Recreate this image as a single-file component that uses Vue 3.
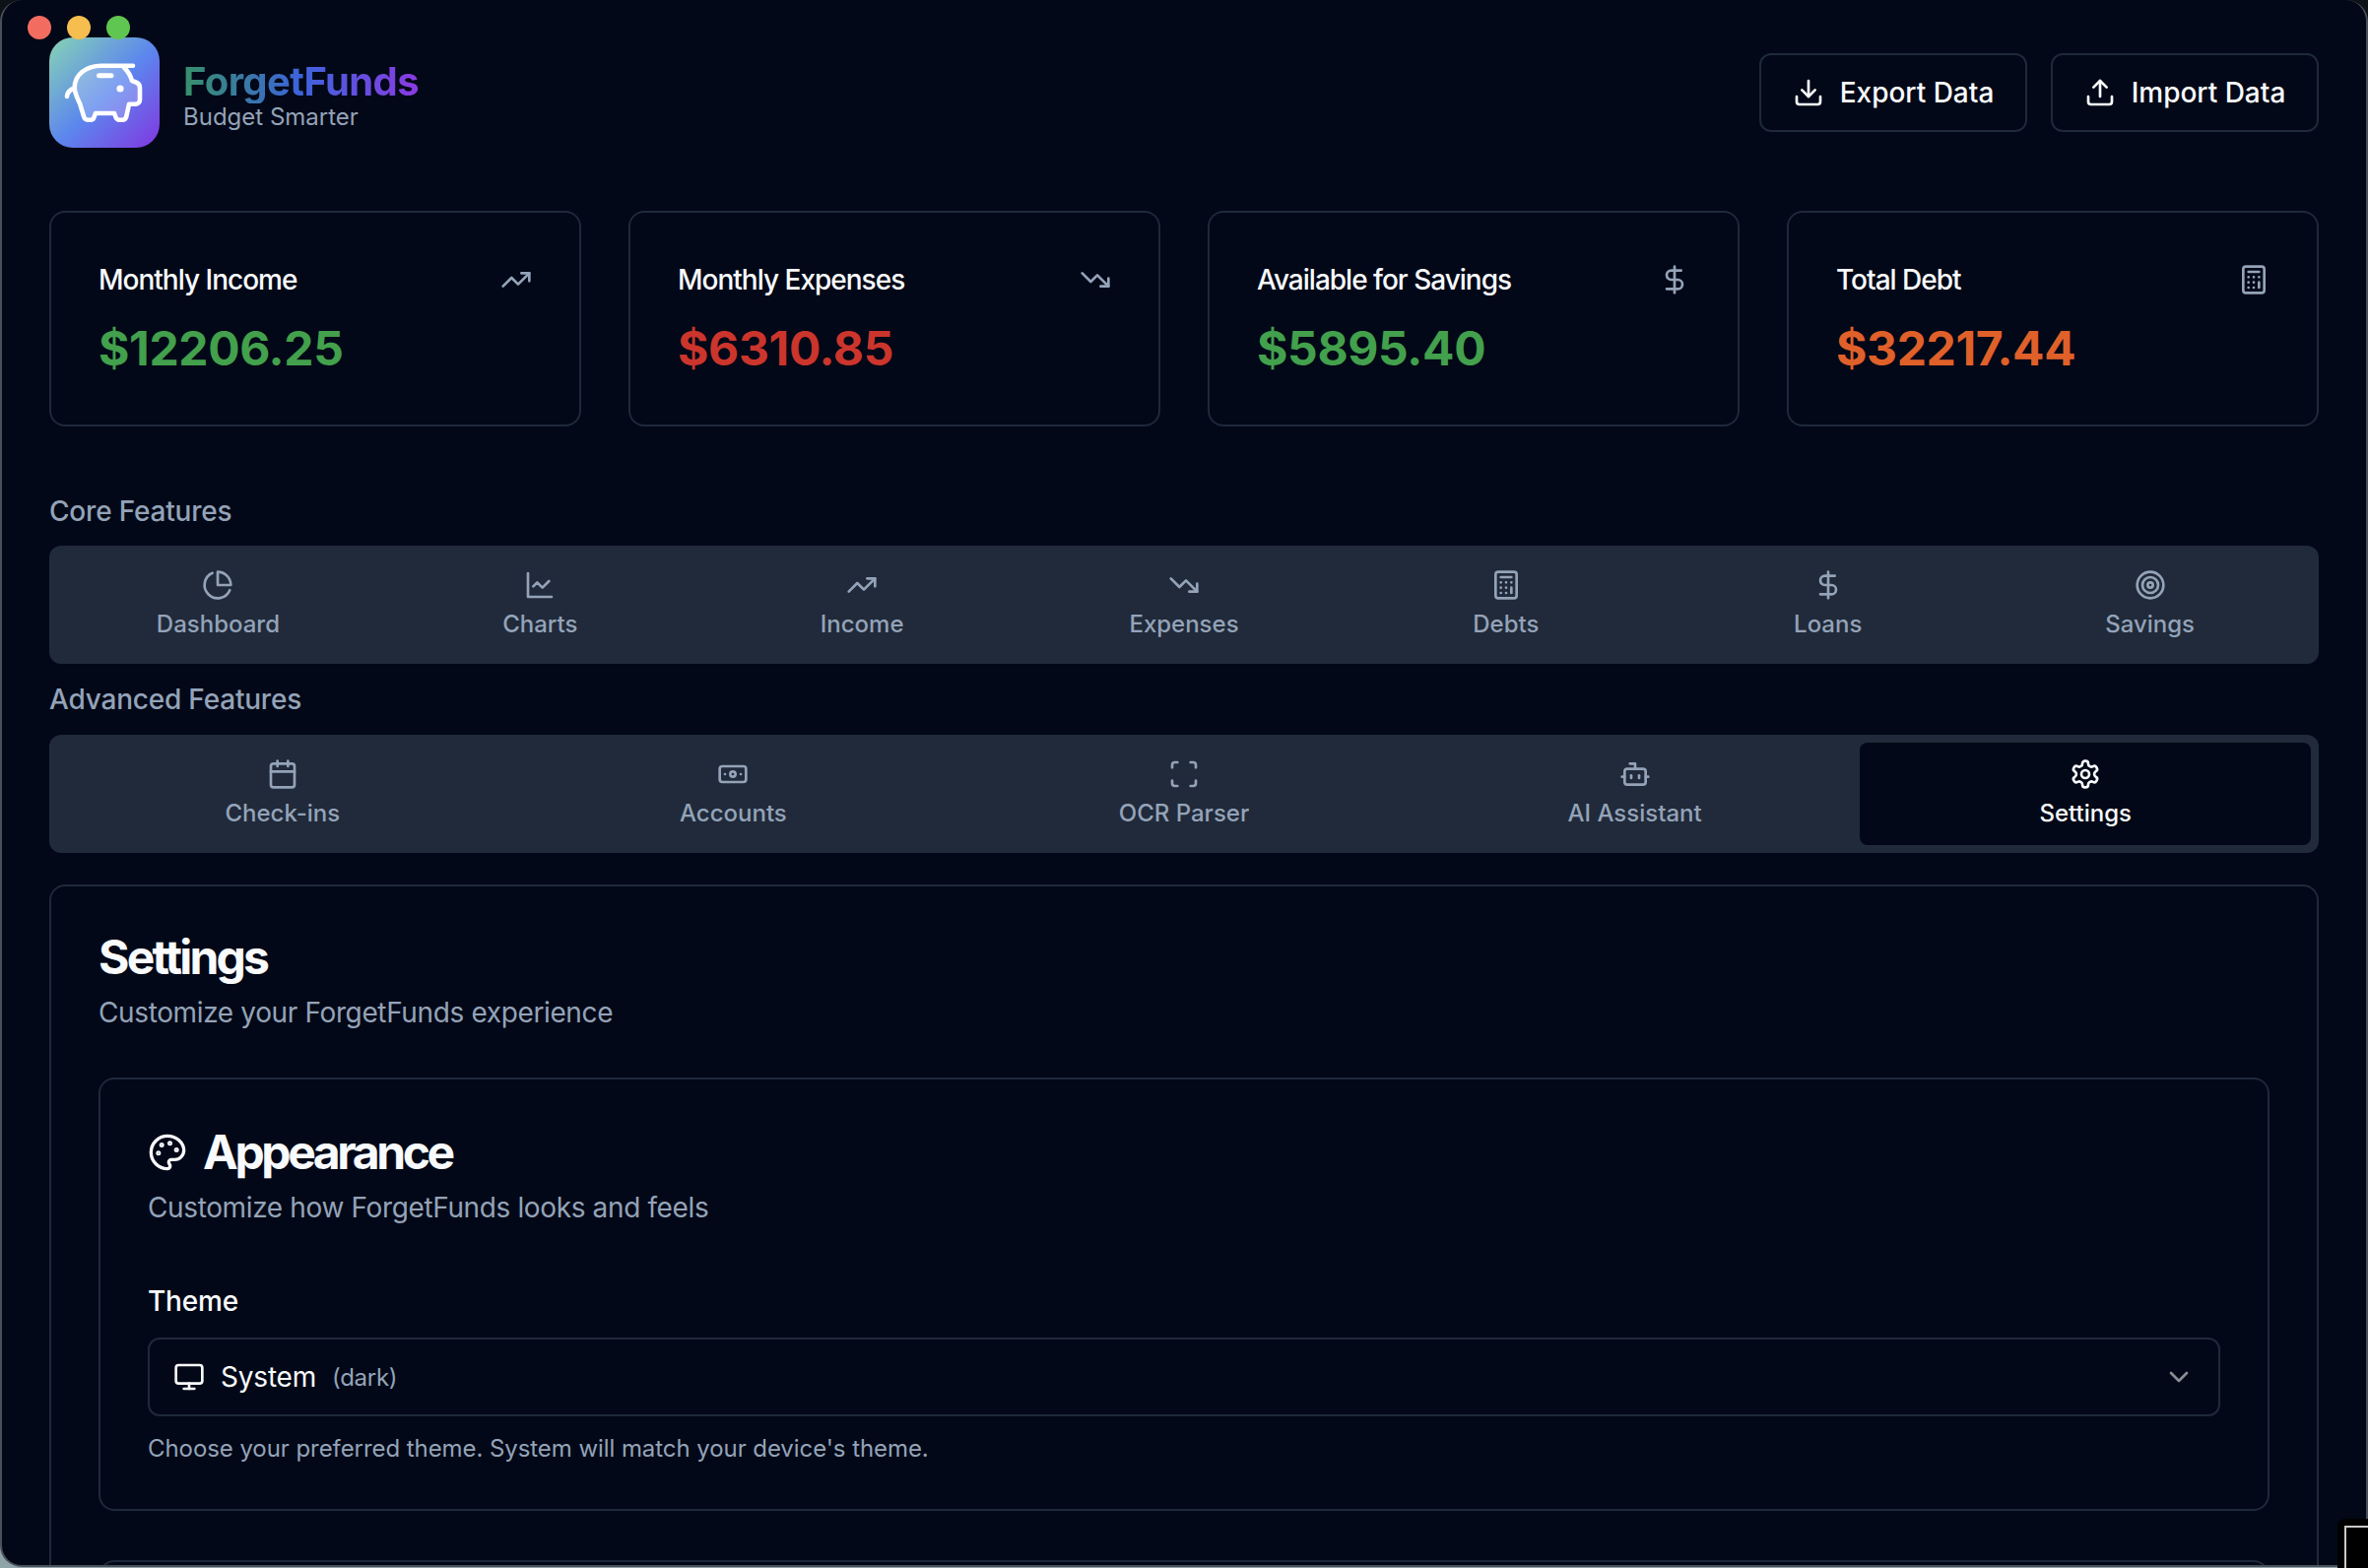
<template>
  <div class="screen">
    <div class="window">
      <div class="lights">
        <span class="light red"></span>
        <span class="light yellow"></span>
        <span class="light green"></span>
      </div>

      <header class="topbar">
        <div class="brand">
          <div class="logo">
            <svg viewBox="0 0 112 112" class="pig" fill="none" stroke="#fff" stroke-width="4.6" stroke-linecap="round" stroke-linejoin="round">
              <path
                d="M85 28.7H53C37 28.7 25.7 38 25.7 51c0 6 3 11 5.3 16l4 13c.6 2.4 2 3.7 4 3.7h3c2 0 3-1.2 3.6-3l1.4-3.7h19l1.4 3.7c.7 1.8 1.8 3 3.6 3h3.4c2 0 3.2-1.3 3.8-3l2.8-13h6.500c2.6 0 4.5-1.8 4.5-4.5V51c0-2.5-1.4-4.6-4-5.5l-4-1.5c-1.5-5.5-4.5-10-8-13.5"
                fill="rgba(255,255,255,0.22)"
              />
              <path d="M18 60c0-3 2-5.5 5-7.5" />
              <path d="M50.5 38.7h12.5" stroke-width="5" />
              <circle cx="72" cy="52" r="3.6" fill="#fff" stroke="none" />
            </svg>
          </div>
          <div class="brand-text">
            <h1 class="brand-name">ForgetFunds</h1>
            <p class="brand-sub">Budget Smarter</p>
          </div>
        </div>
        <div class="actions">
          <button class="btn">
            <svg class="icon" viewBox="0 0 24 24"><path d="M21 15v4a2 2 0 0 1-2 2H5a2 2 0 0 1-2-2v-4" /><polyline points="7 10 12 15 17 10" /><line x1="12" y1="15" x2="12" y2="3" /></svg>
            Export Data
          </button>
          <button class="btn">
            <svg class="icon" viewBox="0 0 24 24"><path d="M21 15v4a2 2 0 0 1-2 2H5a2 2 0 0 1-2-2v-4" /><polyline points="17 8 12 3 7 8" /><line x1="12" y1="3" x2="12" y2="15" /></svg>
            Import Data
          </button>
        </div>
      </header>

      <section class="stats">
        <div v-for="s in stats" :key="s.title" class="stat">
          <div class="stat-head">
            <span class="stat-title">{{ s.title }}</span>
            <svg class="icon muted" viewBox="0 0 24 24" v-html="icons[s.icon]"></svg>
          </div>
          <div class="stat-value" :class="s.tone">{{ s.value }}</div>
        </div>
      </section>

      <h2 class="group-label first">Core Features</h2>
      <nav class="tabs core">
        <div v-for="t in coreTabs" :key="t.label" class="tab">
          <svg class="icon" viewBox="0 0 24 24" v-html="icons[t.icon]"></svg>
          <span>{{ t.label }}</span>
        </div>
      </nav>

      <h2 class="group-label">Advanced Features</h2>
      <nav class="tabs advanced">
        <div v-for="t in advancedTabs" :key="t.label" class="tab" :class="{ active: t.active }">
          <svg class="icon" viewBox="0 0 24 24" v-html="icons[t.icon]"></svg>
          <span>{{ t.label }}</span>
        </div>
      </nav>

      <main class="panel">
        <h2 class="title">Settings</h2>
        <p class="desc">Customize your ForgetFunds experience</p>

        <div class="sub-card">
          <h3 class="title with-icon">
            <svg class="icon palette" viewBox="0 0 24 24" v-html="icons.palette"></svg>
            Appearance
          </h3>
          <p class="desc">Customize how ForgetFunds looks and feels</p>

          <label class="field-label">Theme</label>
          <div class="select">
            <svg class="icon" viewBox="0 0 24 24"><rect x="2" y="3" width="20" height="14" rx="2" /><line x1="8" y1="21" x2="16" y2="21" /><line x1="12" y1="17" x2="12" y2="21" /></svg>
            <span class="select-value">System</span>
            <span class="select-note">(dark)</span>
            <svg class="icon chevron" viewBox="0 0 24 24"><path d="m6 9 6 6 6-6" /></svg>
          </div>
          <p class="hint">Choose your preferred theme. System will match your device's theme.</p>
        </div>

        <div class="sub-card next"></div>
      </main>
    </div>
    <div class="other-window"><div class="other-inner"></div></div>
  </div>
</template>

<script setup>
const icons = {
  up: '<polyline points="22 7 13.5 15.5 8.5 10.5 2 17" /><polyline points="16 7 22 7 22 13" />',
  down: '<polyline points="22 17 13.5 8.5 8.5 13.5 2 7" /><polyline points="16 17 22 17 22 11" />',
  dollar: '<line x1="12" y1="2" x2="12" y2="22" /><path d="M17 5H9.5a3.5 3.5 0 0 0 0 7h5a3.5 3.5 0 0 1 0 7H6" />',
  calc: '<rect x="4" y="2" width="16" height="20" rx="2" /><line x1="8" y1="6" x2="16" y2="6" /><line x1="16" y1="14" x2="16" y2="18" /><path d="M16 10h.01M12 10h.01M8 10h.01M12 14h.01M8 14h.01M12 18h.01M8 18h.01" />',
  pie: '<path d="M21.21 15.89A10 10 0 1 1 8 2.83" /><path d="M22 12A10 10 0 0 0 12 2v10z" />',
  line: '<path d="M3 3v18h18" /><path d="m19 9-5 5-4-4-3 3" />',
  target: '<circle cx="12" cy="12" r="10" /><circle cx="12" cy="12" r="6" /><circle cx="12" cy="12" r="2" />',
  calendar: '<rect x="3" y="4" width="18" height="18" rx="2" /><line x1="16" y1="2" x2="16" y2="6" /><line x1="8" y1="2" x2="8" y2="6" /><line x1="3" y1="10" x2="21" y2="10" />',
  banknote: '<rect x="2" y="6" width="20" height="12" rx="2" /><circle cx="12" cy="12" r="2" /><path d="M6 12h.01M18 12h.01" />',
  scan: '<path d="M3 7V5a2 2 0 0 1 2-2h2" /><path d="M17 3h2a2 2 0 0 1 2 2v2" /><path d="M21 17v2a2 2 0 0 1-2 2h-2" /><path d="M7 21H5a2 2 0 0 1-2-2v-2" />',
  bot: '<path d="M12 8V4H8" /><rect x="4" y="8" width="16" height="12" rx="2" /><path d="M2 14h2" /><path d="M20 14h2" /><path d="M15 13v2" /><path d="M9 13v2" />',
  gear: '<path d="M12.22 2h-.44a2 2 0 0 0-2 2v.18a2 2 0 0 1-1 1.73l-.43.25a2 2 0 0 1-2 0l-.15-.08a2 2 0 0 0-2.73.73l-.22.38a2 2 0 0 0 .73 2.73l.15.1a2 2 0 0 1 1 1.72v.51a2 2 0 0 1-1 1.74l-.15.09a2 2 0 0 0-.73 2.73l.22.38a2 2 0 0 0 2.73.73l.15-.08a2 2 0 0 1 2 0l.43.25a2 2 0 0 1 1 1.73V20a2 2 0 0 0 2 2h.44a2 2 0 0 0 2-2v-.18a2 2 0 0 1 1-1.73l.43-.25a2 2 0 0 1 2 0l.15.08a2 2 0 0 0 2.73-.73l.22-.39a2 2 0 0 0-.73-2.73l-.15-.08a2 2 0 0 1-1-1.74v-.5a2 2 0 0 1 1-1.74l.15-.09a2 2 0 0 0 .73-2.73l-.22-.38a2 2 0 0 0-2.73-.73l-.15.08a2 2 0 0 1-2 0l-.43-.25a2 2 0 0 1-1-1.73V4a2 2 0 0 0-2-2z" /><circle cx="12" cy="12" r="3" />',
  palette: '<circle cx="13.5" cy="6.5" r=".5" fill="currentColor" /><circle cx="17.5" cy="10.5" r=".5" fill="currentColor" /><circle cx="8.5" cy="7.5" r=".5" fill="currentColor" /><circle cx="6.5" cy="12.5" r=".5" fill="currentColor" /><path d="M12 2C6.5 2 2 6.5 2 12s4.5 10 10 10c.926 0 1.648-.746 1.648-1.688 0-.437-.18-.835-.437-1.125-.29-.289-.438-.652-.438-1.125a1.64 1.64 0 0 1 1.668-1.668h1.996c3.051 0 5.555-2.503 5.555-5.554C21.965 6.012 17.461 2 12 2z" />'
}

const stats = [
  { title: 'Monthly Income', value: '$12206.25', tone: 'good', icon: 'up' },
  { title: 'Monthly Expenses', value: '$6310.85', tone: 'bad', icon: 'down' },
  { title: 'Available for Savings', value: '$5895.40', tone: 'good', icon: 'dollar' },
  { title: 'Total Debt', value: '$32217.44', tone: 'warn', icon: 'calc' }
]

const coreTabs = [
  { label: 'Dashboard', icon: 'pie' },
  { label: 'Charts', icon: 'line' },
  { label: 'Income', icon: 'up' },
  { label: 'Expenses', icon: 'down' },
  { label: 'Debts', icon: 'calc' },
  { label: 'Loans', icon: 'dollar' },
  { label: 'Savings', icon: 'target' }
]

const advancedTabs = [
  { label: 'Check-ins', icon: 'calendar' },
  { label: 'Accounts', icon: 'banknote' },
  { label: 'OCR Parser', icon: 'scan' },
  { label: 'AI Assistant', icon: 'bot' },
  { label: 'Settings', icon: 'gear', active: true }
]
</script>

<style>
html,
body {
  margin: 0;
  background: #0b0f14;
}
</style>

<style scoped>
* {
  box-sizing: border-box;
}

.screen {
  position: relative;
  width: 2404px;
  height: 1592px;
  overflow: hidden;
  background: linear-gradient(180deg, #0c1216 0%, #3a4a50 60%, #8fa5aa 100%);
  font-family: Inter, "Liberation Sans", sans-serif;
  color: #f8fafc;
}

.window {
  position: relative;
  height: 1591px;
  width: 2404px;
  padding: 0 48px;
  background: #020817;
  border: 2px solid #4a505a;
  border-top: 0;
  border-radius: 22px;
  overflow: hidden;
}

.lights {
  position: absolute;
  top: 16px;
  left: 26px;
  display: flex;
  gap: 16px;
  z-index: 2;
}

.light {
  width: 24px;
  height: 24px;
  border-radius: 50%;
}

.red { background: #f26d60; }
.yellow { background: #f6bd4f; }
.green { background: #5fc651; }

.topbar {
  display: flex;
  justify-content: space-between;
  align-items: flex-start;
  padding-top: 38px;
  height: 214px;
}

.brand {
  display: flex;
  align-items: center;
  gap: 24px;
}

.logo {
  width: 112px;
  height: 112px;
  border-radius: 24px;
  background: linear-gradient(135deg, #86d4b4 0%, #5c86ee 52%, #8236e0 100%);
}

.pig {
  display: block;
  width: 112px;
  height: 112px;
}

.brand-text {
  padding-top: 6px;
}

.brand-name {
  margin: 0;
  font-size: 40px;
  line-height: 44px;
  font-weight: 700;
  letter-spacing: -0.6px;
  background: linear-gradient(90deg, #37906a 0%, #3d63dc 50%, #8b3ae2 100%);
  -webkit-background-clip: text;
  background-clip: text;
  color: transparent;
}

.brand-sub {
  margin: 0;
  font-size: 24px;
  line-height: 28px;
  color: #94a3b8;
}

.actions {
  display: flex;
  gap: 24px;
  margin-top: 16px;
}

.btn {
  display: flex;
  align-items: center;
  justify-content: center;
  gap: 16px;
  width: 272px;
  height: 80px;
  border: 2px solid #1e293b;
  border-radius: 12px;
  background: #020817;
  color: #f8fafc;
  font: 500 28px Inter, "Liberation Sans", sans-serif;
}

.icon {
  width: 32px;
  height: 32px;
  flex: none;
  fill: none;
  stroke: currentColor;
  stroke-width: 2;
  stroke-linecap: round;
  stroke-linejoin: round;
}

.muted {
  color: #94a3b8;
}

.stats {
  display: grid;
  grid-template-columns: repeat(4, 1fr);
  gap: 48px;
}

.stat {
  height: 219px;
  padding: 48px;
  border: 2px solid #1e293b;
  border-radius: 16px;
}

.stat-head {
  display: flex;
  justify-content: space-between;
  align-items: center;
  height: 40px;
}

.stat-title {
  font-size: 28px;
  font-weight: 500;
  letter-spacing: -1px;
}

.stat-value {
  margin-top: 18px;
  font-size: 48px;
  line-height: 64px;
  font-weight: 700;
  letter-spacing: -0.35px;
}

.good { color: #43a04c; }
.bad { color: #cb352c; }
.warn { color: #e0602a; }

.group-label {
  margin: 0;
  height: 72px;
  display: flex;
  align-items: center;
  font-size: 28px;
  font-weight: 500;
  letter-spacing: -0.2px;
  color: #94a3b8;
}

.group-label.first {
  margin-top: 51px;
  height: 70px;
}

.tabs {
  display: grid;
  height: 120px;
  padding: 8px;
  border-radius: 12px;
  background: #202a3a;
}

.core { grid-template-columns: repeat(7, 1fr); }
.advanced { grid-template-columns: repeat(5, 1fr); }

.tab {
  display: flex;
  flex-direction: column;
  align-items: center;
  justify-content: center;
  gap: 8px;
  border-radius: 8px;
  font-size: 24px;
  font-weight: 500;
  line-height: 32px;
  color: #94a3b8;
}

.tab.active {
  background: #020817;
  color: #f8fafc;
}

.panel {
  margin-top: 32px;
  height: 760px;
  padding: 48px;
  border: 2px solid #1e293b;
  border-radius: 16px;
}

.title {
  margin: 0;
  font-size: 48px;
  line-height: 48px;
  font-weight: 700;
  letter-spacing: -2.8px;
}

.with-icon {
  display: flex;
  align-items: center;
  gap: 16px;
  padding-top: 2px;
  letter-spacing: -3.4px;
}

.palette {
  width: 40px;
  height: 40px;
}

.desc {
  margin: 12px 0 0;
  font-size: 28px;
  line-height: 40px;
  letter-spacing: -0.37px;
  color: #94a3b8;
}

.sub-card {
  margin-top: 46px;
  padding: 48px;
  height: 440px;
  border: 2px solid #1e293b;
  border-radius: 16px;
}

.sub-card.next {
  margin-top: 50px;
}

.field-label {
  display: block;
  margin-top: 61px;
  font-size: 28px;
  line-height: 28px;
  font-weight: 500;
  letter-spacing: -0.2px;
}

.select {
  display: flex;
  align-items: center;
  height: 80px;
  margin-top: 23px;
  padding: 0 24px;
  border: 2px solid #1e293b;
  border-radius: 12px;
  font-size: 28px;
}

.select-value {
  margin-left: 16px;
  letter-spacing: -0.2px;
}

.select-note {
  margin-left: 16px;
  font-size: 24px;
  letter-spacing: -0.3px;
  color: #94a3b8;
}

.chevron {
  margin-left: auto;
  color: #8a8d94;
}

.hint {
  margin: 17px 0 0;
  font-size: 24px;
  line-height: 32px;
  letter-spacing: -0.07px;
  color: #94a3b8;
}

.other-window {
  position: absolute;
  right: 0;
  bottom: 0;
  width: 31px;
  height: 50px;
  padding: 7px 0 0 7px;
  background: #000;
  border-top-left-radius: 8px;
}

.other-inner {
  height: 100%;
  background: #000;
  border: 2px solid #c8c8c8;
  border-right: 0;
  border-bottom: 0;
}
</style>
